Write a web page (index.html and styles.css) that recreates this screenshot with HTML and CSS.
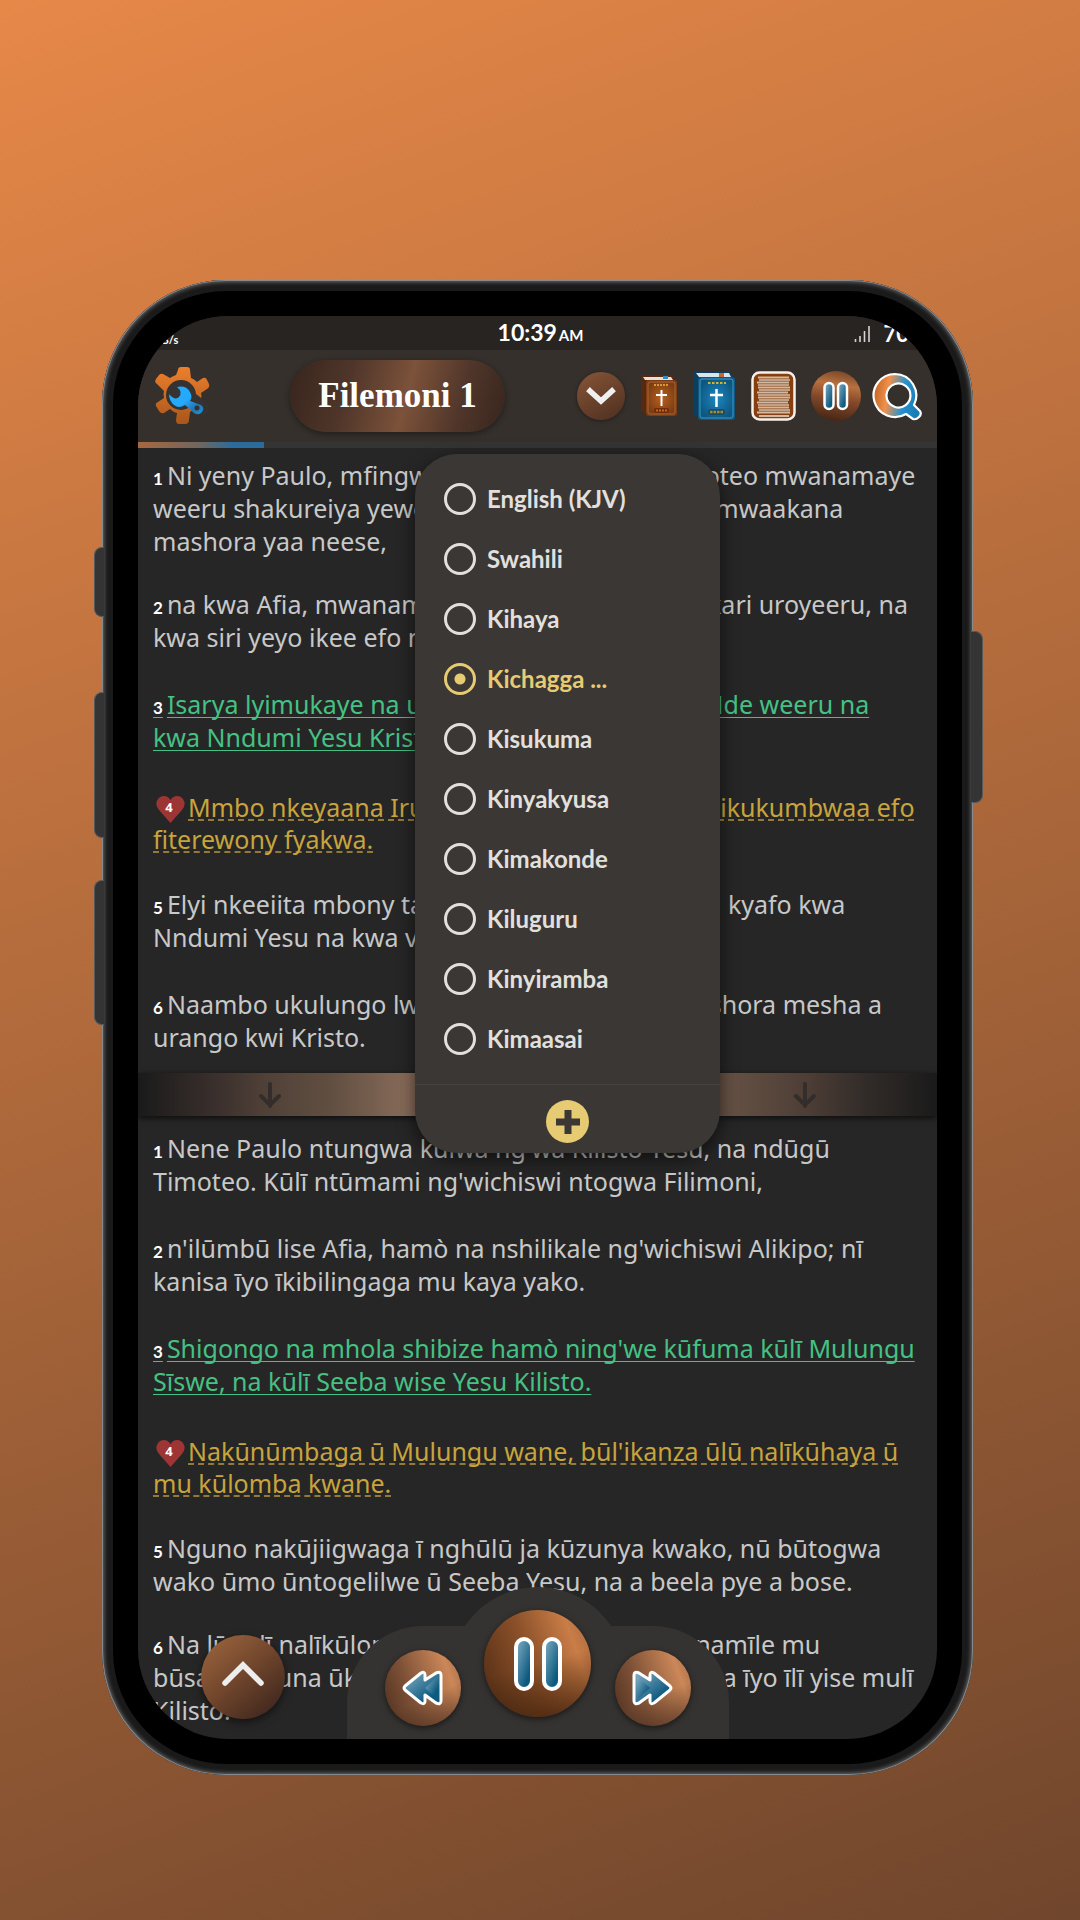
FILE: index.html
```html
<!DOCTYPE html>
<html lang="sw">
<head>
<meta charset="utf-8">
<meta name="viewport" content="width=device-width, initial-scale=1">
<title>Filemoni 1</title>
<link rel="stylesheet" href="styles.css">
</head>
<body>
<svg class="defs" aria-hidden="true">
  <defs>
    <linearGradient id="gearFill" x1="0" y1="0" x2="0" y2="1"><stop offset="0" stop-color="#ee7f2c"/><stop offset="1" stop-color="#a8561c"/></linearGradient>
    <linearGradient id="wrenchFill" x1="0" y1="0" x2="1" y2="1"><stop offset=".5" stop-color="#25a9fb"/><stop offset=".75" stop-color="#1f78b2"/><stop offset="1" stop-color="#2490d6"/></linearGradient>
    <radialGradient id="brownCover"><stop offset="0" stop-color="#b9601d"/><stop offset="1" stop-color="#7c3d14"/></radialGradient>
    <radialGradient id="blueCover"><stop offset="0" stop-color="#1b87c0"/><stop offset="1" stop-color="#0f5780"/></radialGradient>
    <linearGradient id="blueGlyph" x1="0" y1="0" x2="1" y2="1"><stop offset="0" stop-color="#86b0c4"/><stop offset=".75" stop-color="#0d5a80"/><stop offset="1" stop-color="#0d5a80"/></linearGradient>
    <linearGradient id="lens" x1="0" y1="0" x2="1" y2=".15"><stop offset="0" stop-color="#bd5c1c"/><stop offset=".35" stop-color="#f0914d"/><stop offset=".7" stop-color="#2591cd"/><stop offset="1" stop-color="#1b7db4"/></linearGradient>
  </defs>
</svg>
<main class="stage">
  <div class="phone">
    <span class="key key--mute"></span>
    <span class="key key--up"></span>
    <span class="key key--down"></span>
    <span class="key key--power"></span>
    <div class="screen">
      <div class="status">
        <span class="status__rate">KB/s</span>
        <span class="status__time">10:39<small>AM</small></span>
        <span class="status__right">
          <svg width="17" height="18" viewBox="0 0 17 18" stroke="#d5d4d3" stroke-width="1.6"><path d="M1.500 14v3M6 11v6M10.500 6v11M15 1v16"/></svg>
          <span>70%</span>
        </span>
      </div>

      <header class="toolbar">
        <button class="icon-btn gear" aria-label="Settings">
          <svg width="60" height="58" viewBox="0 0 60 58">
            <path fill="url(#gearFill)" d="M26 3q0-3 3-3h6q3 0 3 3l1 8q3 1 6 4l6-4q3-1 4 2l2 4q1 3-2 5l-6 4q1 3 0 6l-3 8-8 5-1 8q0 4-4 4h-6q-3 0-3-4l1-7q-4-1-7-4l-6 4q-3 1-5-2l-3-5q-1-3 2-4l6-4q-1-4 0-7L5 17q-3-2-1-5l3-4q2-2 4-1l7 4q3-2 6-3z"/>
            <circle cx="29" cy="28" r="15" fill="#343232"/>
            <path fill="#343232" d="M35 37l9-10 14 11q0 10-8 11z"/>
            <path fill="url(#wrenchFill)" d="M17 27q6 7 10 3 4-5-2-10 9-2 13 5 3 6 0 9l11 4q4 3 1 7-3 4-8 1l-9-8q-6 4-11 0-5-4-5-11z"/>
            <circle cx="45" cy="41" r="2.500" fill="#343232"/>
          </svg>
        </button>
        <button class="chapter">Filemoni 1</button>
        <nav class="tools" aria-label="Tools">
          <button class="icon-btn round round--chev" aria-label="Choose language">
            <svg width="30" height="18" viewBox="0 0 30 18" fill="none" stroke="#efefef" stroke-width="5.500" stroke-linecap="square"><path d="M4 4l11 10L26 4"/></svg>
          </button>
          <button class="icon-btn book" aria-label="First version">
            <svg width="37" height="42" viewBox="0 0 37 42">
              <path fill="#572a10" d="M0 3q0-3 3-3h28l3 5v35H5L0 36z"/>
              <path fill="#e6e0dc" d="M2 2h28l2 3H4z"/><path fill="#2a8fc4" d="M22 1h5v3h-5z"/>
              <rect x="5" y="5" width="31" height="36" rx="3" fill="url(#brownCover)"/>
              <rect x="7" y="7" width="27" height="32" rx="2" fill="none" stroke="#a96632"/>
              <path stroke="#d99a2c" stroke-width="2" stroke-dasharray="2 1" d="M13 10h15"/>
              <path stroke="#fff" stroke-width="2" d="M20.500 15v16M15 20h11"/>
              <rect x="13" y="33" width="15" height="5" rx="2" fill="#6f2c0c"/><path stroke="#c9641d" stroke-width="2" stroke-dasharray="2 1" d="M15 35.500h11"/>
            </svg>
          </button>
          <button class="icon-btn" aria-label="Second version">
            <svg width="43" height="50" viewBox="0 0 43 50">
              <path fill="#0c3f5e" d="M0 3q0-3 3-3h33l4 5v42H6L0 43z"/>
              <path fill="#dbe4e8" d="M3 2h33l2 4H6z"/><path fill="#c0683a" d="M26 2h5v4h-5z"/>
              <rect x="5" y="6" width="37" height="43" rx="3" fill="url(#blueCover)"/>
              <rect x="7" y="8" width="33" height="39" rx="2" fill="none" stroke="#3d9cc9"/>
              <path stroke="#d2b236" stroke-width="2" stroke-dasharray="2.500 1.500" d="M15 12h18"/>
              <path stroke="#fff" stroke-width="2.500" d="M23.500 18v18M17 24h13"/>
              <rect x="15" y="38" width="17" height="6" rx="3" fill="#174c66"/><path stroke="#a78a34" stroke-width="2.500" stroke-dasharray="2.500 1" d="M17 41h13"/>
            </svg>
          </button>
          <button class="icon-btn page" aria-label="Reading layout">
            <svg width="45" height="50" viewBox="0 0 45 50">
              <rect x="1.500" y="1.500" width="42" height="47" rx="7" fill="#84400f" stroke="#f5f0ec" stroke-width="2.500"/>
              <path stroke="#d3b7a0" stroke-width="2" d="M7 6.500h31M6 11.500h32M7 16.500h32M6 21.500h31M7 26.500h32M6 31.500h31M7 36.500h31M6 41.500h33M8 45h30"/>
              <path stroke="#fff" stroke-width="1" d="M8 9h31M7 14h31M8 19h31M7 24h32M8 29h30M7 34h31M8 39h31"/>
            </svg>
          </button>
          <button class="icon-btn round round--pause" aria-label="Pause">
            <svg width="26" height="30" viewBox="0 0 26 30" fill="url(#blueGlyph)" stroke="#fff" stroke-width="2.500"><rect x="1.500" y="2" width="9" height="26" rx="4.500"/><rect x="15" y="2" width="9" height="26" rx="4.500"/></svg>
          </button>
          <button class="icon-btn" aria-label="Search">
            <svg width="50" height="49" viewBox="0 0 50 49"><path fill="url(#lens)" fill-rule="evenodd" stroke="#fff" stroke-width="2.200" stroke-linejoin="round" d="M23 2a21.500 21.500 0 1 0 11 40l7 5q3 1 6-2t1-6l-6-6A21.500 21.500 0 0 0 23 2zm0 10a12 12 0 1 1 0 23 12 12 0 0 1 0-23z"/></svg>
          </button>
        </nav>
      </header>
      <progress class="progress" value="126" max="799" aria-label="Playback position"></progress>

      <article class="pane pane--first">
        <p class="verse verse--tight"><b class="num">1</b>Ni yeny Paulo, mfingwa ya Kristo Yesu, na Timoteo mwanamaye weeru shakureiya yeweru, na kwa Filimoni oofo mwaakana mashora yaa neese,</p>
        <p class="verse"><b class="num">2</b>na kwa Afia, mwanamaye oru, na Arkipo, fo askari uroyeeru, na kwa siri yeyo ikee efo mmbeny yafo:</p>
        <p class="verse verse--green"><b class="num">3</b>Isarya lyimukaye na ufoo naang fyafuma kwa Nde weeru na kwa&nbsp;Nndumi Yesu Kristo.</p>
        <p class="verse verse--gold"><b class="heart"><svg width="29" height="27" viewBox="0 0 29 27" fill="#9c3533"><path d="M14.500 27L3 14Q-1 9 1 5 3 0 8 0q4 0 6.500 4Q17 0 21 0q5 0 7 5 2 4-2 9z"/></svg><i>4</i></b>Mmbo nkeyaana Iruwa lyakwa mfiri hose, ngiikukumbwaa efo fiterewony fyakwa.</p>
        <p class="verse"><b class="num">5</b>Elyi nkeeiita mbony tapo ikunda na iiridikyia lya kyafo kwa Nndumi Yesu na kwa vandu vakwe.</p>
        <p class="verse"><b class="num">6</b>Naambo ukulungo lwa iiridikyia lwafo luna mashora mesha a urango kwi Kristo.</p>
      </article>

      <div class="divider">
        <svg width="22" height="26" viewBox="0 0 22 26"><path d="M11 2v22M2 14l9 9 9-9"/></svg>
        <svg width="22" height="26" viewBox="0 0 22 26"><path d="M11 2v22M2 14l9 9 9-9"/></svg>
      </div>

      <article class="pane pane--second">
        <p class="verse"><b class="num">1</b>Nene Paulo ntungwa kuīwa ng'wa Kilisto Yesu, na ndūgū Timoteo. Kūlī ntūmami ng'wichiswi ntogwa Filimoni,</p>
        <p class="verse"><b class="num">2</b>n'ilūmbū lise Afia, hamò na nshilikale ng'wichiswi Alikipo; nī kanisa īyo īkibilingaga mu kaya yako.</p>
        <p class="verse verse--green"><b class="num">3</b>Shigongo na mhola shibize hamò ning'we kūfuma kūlī Mulungu Sīswe, na kūlī Seeba wise Yesu Kilisto.</p>
        <p class="verse verse--gold"><b class="heart"><svg width="29" height="27" viewBox="0 0 29 27" fill="#9c3533"><path d="M14.500 27L3 14Q-1 9 1 5 3 0 8 0q4 0 6.500 4Q17 0 21 0q5 0 7 5 2 4-2 9z"/></svg><i>4</i></b>Nakūnūmbaga ū Mulungu wane, būl'ikanza ūlū nalīkūhaya ū mu kūlomba kwane.</p>
        <p class="verse verse--tight"><b class="num">5</b>Nguno nakūjiigwaga ī nghūlū ja kūzunya kwako, nū būtogwa wako ūmo ūntogelilwe ū Seeba Yesu, na a beela pye a bose.</p>
        <p class="verse"><b class="num">6</b>Na lūgulī nalīkūlomba giki ūbūtogwa waki bonamīle mu būsangirii&nbsp;una ūkūmana giti sagali mihayo yawiza īyo īlī yise mulī Kilisto.</p>
      </article>

      <form class="menu" aria-label="Languages">
        <div class="menu__list">
          <label class="option"><input type="radio" name="lang">English (KJV)</label>
          <label class="option"><input type="radio" name="lang">Swahili</label>
          <label class="option"><input type="radio" name="lang">Kihaya</label>
          <label class="option"><input type="radio" name="lang" checked>Kichagga ...</label>
          <label class="option"><input type="radio" name="lang">Kisukuma</label>
          <label class="option"><input type="radio" name="lang">Kinyakyusa</label>
          <label class="option"><input type="radio" name="lang">Kimakonde</label>
          <label class="option"><input type="radio" name="lang">Kiluguru</label>
          <label class="option"><input type="radio" name="lang">Kinyiramba</label>
          <label class="option"><input type="radio" name="lang">Kimaasai</label>
        </div>
        <div class="menu__foot">
          <button class="add" type="button" aria-label="Add language">
            <svg width="26" height="26" viewBox="0 0 26 26" fill="#3b3734"><path d="M9.500 1h7v8.500H25v7h-8.500V25h-7v-8.500H1v-7h8.500z"/></svg>
          </button>
        </div>
      </form>

      <button class="to-top" aria-label="Scroll to top">
        <svg width="44" height="26" viewBox="0 0 44 26" fill="none" stroke="#eeeded" stroke-width="5.500" stroke-linecap="round"><path d="M4 22L22 4l18 18"/></svg>
      </button>

      <div class="player">
        <button class="skip" aria-label="Rewind">
          <svg width="41" height="36" viewBox="0 0 41 36" fill="url(#blueGlyph)" stroke="#fff" stroke-width="3" stroke-linejoin="round"><path d="M19 3q4-2 4 2v5l11-7q5-2 5 2v26q0 4-5 2l-11-8v6q0 4-4 2L3 20q-2-2 0-4z"/><path d="M23 18L36 6v24z" stroke="none"/></svg>
        </button>
        <button class="play" aria-label="Pause playback">
          <svg width="50" height="56" viewBox="0 0 50 56" fill="url(#blueGlyph)" stroke="#fff" stroke-width="4"><rect x="3" y="3" width="16" height="50" rx="8"/><rect x="31" y="3" width="16" height="50" rx="8"/></svg>
        </button>
        <button class="skip" aria-label="Fast forward">
          <svg width="41" height="36" viewBox="0 0 41 36" fill="url(#blueGlyph)" stroke="#fff" stroke-width="3" stroke-linejoin="round"><path d="M22 3q-4-2-4 2v5L7 3Q2 1 2 5v26q0 4 5 2l11-8v6q0 4 4 2l16-13q2-2 0-4z"/><path d="M18 18L5 6v24z" stroke="none"/></svg>
        </button>
      </div>
    </div>
  </div>
</main>
</body>
</html>
```
FILE: styles.css
```css
* { box-sizing: border-box; }

body {
  margin: 0;
  font-family: "Noto Sans", sans-serif;
  color: #c8c8c8;
}

button {
  font: inherit;
  color: inherit;
  border: 0;
  padding: 0;
  background: none;
}

svg { display: block; }

.defs { position: absolute; width: 0; height: 0; }

.stage {
  min-height: 100vh;
  padding: 280px 107px 144px 102px;
  background: linear-gradient(160deg, #e68848, #70462c);
}

/* Phone body: metal rim, dark band, black bezel */
.phone {
  position: relative;
  padding: 36px;
  border-radius: 124px;
  background: #000;
  box-shadow:
    inset 0 0 0 1px #85898c,
    inset 0 0 4px 2px #6b6b6b,
    inset 0 0 0 11px #1a1a1a;
}

.key {
  position: absolute;
  left: -8px;
  width: 10px;
  background: #343434;
  border: 1px solid #56595b;
  border-right: 0;
  border-radius: 8px 0 0 8px;
}
.key--mute { top: 267px; height: 70px; }
.key--up { top: 412px; height: 146px; }
.key--down { top: 600px; height: 145px; }
.key--power {
  top: 351px;
  left: auto;
  right: -10px;
  width: 12px;
  height: 138px;
  height: 172px;
  border: 1px solid #56595b;
  border-left: 0;
  border-radius: 0 8px 8px 0;
}

.screen {
  position: relative;
  overflow: hidden;
  border-radius: 90px;
  background: #262626;
}

.status {
  display: grid;
  grid-template-columns: 1fr auto 1fr;
  align-items: center;
  height: 34px;
  padding: 0 10px 0 16px;
  background: #282422;
  color: #fff;
  font-family: Lato, sans-serif;
  font-weight: 700;
}
.status__rate { font-size: 11px; padding-top: 10px; }
.status__time { font-size: 23px; line-height: 32px; padding-bottom: 2px; }
.status__time small { font-size: 15px; margin-left: 2px; }
.status__right {
  display: flex;
  align-items: center;
  justify-content: flex-end;
  gap: 12px;
  padding-bottom: 2px;
  font-size: 22px;
}

.toolbar {
  display: flex;
  align-items: center;
  height: 92px;
  padding: 0 15px 0 14px;
  background: #35302c;
}
.icon-btn { display: grid; place-items: center; flex: none; }
.book { padding-left: 1px; }

.chapter {
  width: 215px;
  height: 72px;
  margin-left: 78px;
  border-radius: 36px;
  background: linear-gradient(105deg, #37251d, #50362a 28%, #7c523a 54%, #50362a 78%, #37251d);
  box-shadow: 0 2px 6px #0006;
  color: #fff;
  font: 700 35px/72px "Liberation Serif", serif;
}

.tools {
  display: flex;
  flex: 1;
  align-items: center;
  justify-content: flex-end;
  gap: 15px;
}
.round { border-radius: 50%; }
.round--chev {
  width: 48px;
  height: 48px;
  background: linear-gradient(150deg, #875537, #4d2f20);
  box-shadow: 0 1px 4px #0006;
}
.round--pause {
  width: 50px;
  height: 50px;
  margin-right: -4px;
  background: linear-gradient(10deg, #3c2010, #84492a 45%, #b8713f 70%, #6c3d22);
}

.progress {
  display: block;
  width: 100%;
  height: 6px;
  appearance: none;
  border: 0;
  background: #343434;
}
.progress::-webkit-progress-bar { background: #343434; }
.progress::-webkit-progress-value { background: linear-gradient(90deg, #a8683e, #6e6660 50%, #2b6c9c 75%); }

.pane { padding: 0 15px; }
.pane--first { padding-top: 11px; padding-bottom: 19px; }
.pane--second { padding-top: 16px; padding-bottom: 12px; }

.verse {
  margin: 0 0 34px;
  font-size: 25px;
  line-height: 33px;
}
.verse--tight { margin-bottom: 30px; }
.verse:last-child { margin-bottom: 0; }
.verse--green {
  color: #45c184;
  text-decoration: underline 1px;
  text-underline-offset: 3px;
  text-decoration-skip-ink: none;
}
.verse--gold {
  margin-bottom: 33px;
  padding-top: 3px;
  line-height: 32px;
  color: #c8a43c;
  text-decoration: underline dashed 2px #93793a;
  text-underline-offset: 2px;
  text-decoration-skip-ink: none;
}
.num {
  margin-right: 4px;
  color: #fff;
  font: 700 17px/17px Lato, sans-serif;
}
.heart {
  display: inline-grid;
  place-items: center;
  width: 35px;
  height: 27px;
  vertical-align: -6px;
  color: #fff;
  font-size: 13px;
  line-height: 27px;
}
.heart > * { grid-area: 1 / 1; }
.heart i { font-style: normal; margin: 0 3px 4px 0; }

.divider {
  display: flex;
  align-items: center;
  justify-content: space-between;
  height: 43px;
  padding: 0 121px;
  background: linear-gradient(90deg, #1a1a1a, #3b302d 10%, #504138 16%, #604e40 24%, #896c5a 34%, #896c5a 55%, #6a5547 72%, #4c3d35 84%, #322c29 91%, #1a1a1a);
  box-shadow: 0 2px 6px #000a;
}
.divider path {
  fill: none;
  stroke: #332e2c;
  stroke-width: 4;
  stroke-linecap: round;
}

/* Language menu floats over the text */
.menu {
  position: absolute;
  top: 138px;
  left: 277px;
  width: 305px;
  border-radius: 42px;
  background: #3b3734;
  box-shadow: 0 6px 18px #0009;
}
.menu__list { padding: 15px 29px; }
.option {
  display: flex;
  align-items: center;
  gap: 11px;
  height: 60px;
  color: #e2e0de;
  font: 700 24px/60px Lato, sans-serif;
}
.option input {
  appearance: none;
  width: 32px;
  height: 32px;
  margin: 0;
  border: 3px solid #e2e0de;
  border-radius: 50%;
}
.option:has(:checked) { color: #e6cb72; }
.option input:checked {
  border-color: #e6cb72;
  background: radial-gradient(#e6cb72 5px, transparent 6px);
}
.menu__foot {
  display: grid;
  place-items: center;
  height: 69px;
  padding-top: 5px;
  border-top: 1px solid #454240;
}
.add {
  display: grid;
  place-items: center;
  width: 43px;
  height: 43px;
  border-radius: 50%;
  background: #e6cb72;
}

.to-top {
  position: absolute;
  left: 63px;
  bottom: 20px;
  display: grid;
  place-items: center;
  width: 84px;
  height: 84px;
  padding-bottom: 6px;
  border-radius: 50%;
  background: linear-gradient(140deg, #a06840, #74482d 45%, #34201a);
  box-shadow: 0 3px 8px #0008;
}

/* Playback dock floats over the foot of the text */
.player {
  position: absolute;
  left: 50%;
  bottom: 0;
  display: flex;
  align-items: flex-end;
  justify-content: space-between;
  width: 382px;
  height: 113px;
  margin-left: -191px;
  padding: 0 38px 13px;
  border-radius: 76px 76px 0 0;
  background: #353331;
}
.player::before {
  content: "";
  position: absolute;
  top: -39px;
  left: 103px;
  width: 176px;
  height: 152px;
  border-radius: 88px 88px 0 0;
  background: #353331;
}
.skip, .play {
  position: relative;
  display: grid;
  place-items: center;
  border-radius: 50%;
  box-shadow: 0 2px 6px #0008;
}
.skip {
  width: 76px;
  height: 76px;
  background: linear-gradient(155deg, transparent 60%, #3a2216aa), linear-gradient(70deg, #4e2f1e, #7c5036 35%, #cb8758 80%, #a36b45);
}
.play {
  width: 107px;
  height: 107px;
  margin-bottom: 9px;
  background: linear-gradient(165deg, transparent 50%, #3a1c08cc), linear-gradient(70deg, #4e2a13, #8a5029 45%, #c97d47 80%, #a3653a);
}
```
